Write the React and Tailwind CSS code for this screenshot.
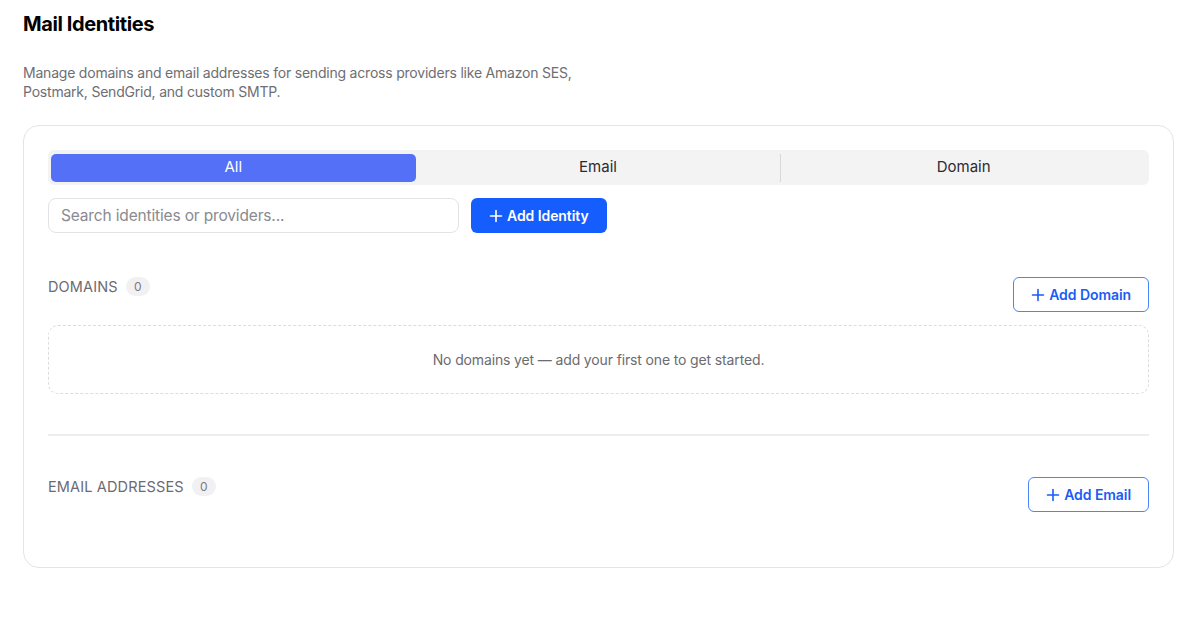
import React, { useState } from 'react';

const Plus = () => (
  <svg width="14" height="14" viewBox="0 0 14 14" fill="none" stroke="currentColor" strokeWidth="1.6" strokeLinecap="round">
    <path d="M7 1.5v11M1.5 7h11" />
  </svg>
);

const SectionHeader = ({ title, count, action }) => (
  <div className="flex items-start justify-between">
    <div className="flex items-center gap-2 h-[19px]">
      <span className="text-[14.5px] tracking-[0.01em] text-[#6b6b73] uppercase">{title}</span>
      <span className="h-[19px] min-w-[24px] px-2 rounded-full bg-[#f1f1f3] text-[12px] text-[#7a7a80] flex items-center justify-center">
        {count}
      </span>
    </div>
    <button className="h-[35px] px-[17px] flex items-center gap-1 border border-[#4a86f7] rounded-md text-[#1a5cf5] text-[14px] tracking-[-0.005em] font-semibold bg-white">
      <Plus />
      {action}
    </button>
  </div>
);

const App = () => {
  const [tab, setTab] = useState('All');
  const tabs = ['All', 'Email', 'Domain'];

  return (
    <div className="min-h-screen bg-white px-[23px] pt-[12px] font-['Inter','Liberation_Sans',sans-serif] text-[#111]">
      <h1 className="text-[20px] leading-[24px] font-bold tracking-[-0.02em] text-black">Mail Identities</h1>
      <p className="mt-[27px] max-w-[575px] text-[14px] leading-[19px] tracking-[-0.015em] text-[#6e6e73]">
        Manage domains and email addresses for sending across providers like Amazon SES, Postmark, SendGrid, and custom SMTP.
      </p>

      <div className="mt-[24px] w-[1151px] border border-[#e4e4e7] rounded-2xl px-6 pt-6 pb-[55px]">
        <div className="h-[35px] bg-[#f3f3f4] rounded-md p-[3px] flex items-center">
          {tabs.map((t, i) => (
            <React.Fragment key={t}>
              {i === 2 && <div className="w-px h-[28px] bg-[#d8d8dc]" />}
              <button
                onClick={() => setTab(t)}
                className={
                  'flex-1 h-[28px] rounded-[5px] text-[15px] ' +
                  (tab === t ? 'bg-[#5370f6] text-white' : 'text-[#2b2b30]')
                }
              >
                {t}
              </button>
            </React.Fragment>
          ))}
        </div>

        <div className="mt-[13px] flex items-center gap-3">
          <input
            type="text"
            placeholder="Search identities or providers..."
            className="w-[411px] h-[35px] px-3 border border-[#e3e3e6] rounded-lg text-[15.5px] tracking-[-0.01em] placeholder-[#8a8a90] outline-none"
          />
          <button className="h-[35px] px-[18px] flex items-center gap-1 bg-[#155dfc] rounded-md text-white text-[14px] tracking-[-0.005em] font-semibold">
            <Plus />
            Add Identity
          </button>
        </div>

        <div className="mt-[44px]">
          <SectionHeader title="Domains" count="0" action="Add Domain" />
          <div className="mt-[13px] h-[69px] border border-dashed border-[#dcdcdf] rounded-[10px] flex items-center justify-center text-[14px] tracking-[-0.01em] text-[#6b6b70]">
            No domains yet — add your first one to get started.
          </div>
        </div>

        <div className="mt-[40px] h-[2px] bg-[#ededee]" />

        <div className="mt-[41px]">
          <SectionHeader title="Email Addresses" count="0" action="Add Email" />
        </div>
      </div>
    </div>
  );
};

export default App;
